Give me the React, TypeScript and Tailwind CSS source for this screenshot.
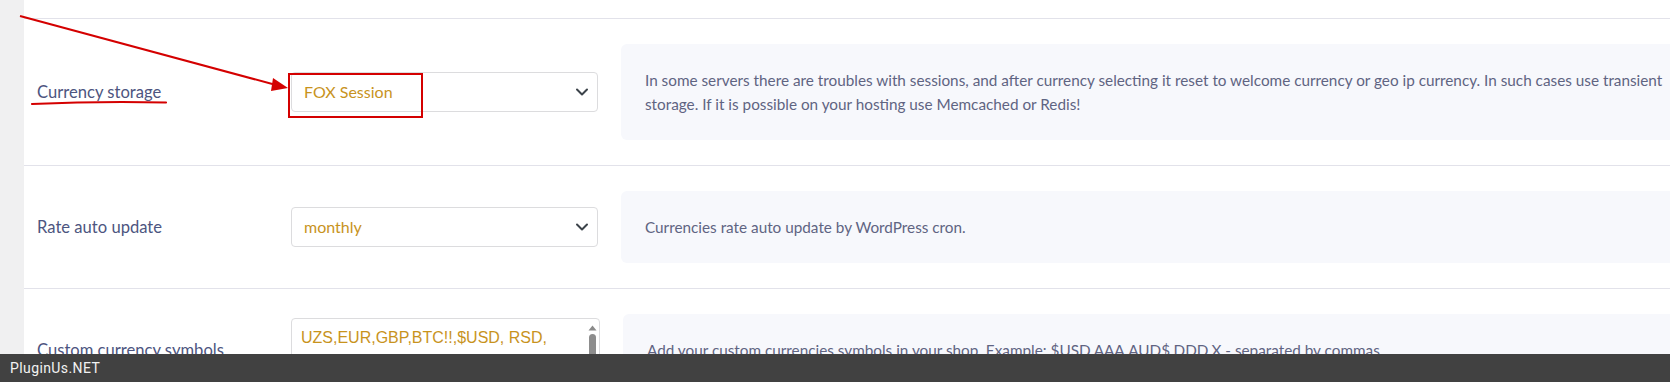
import React from 'react';

const Chevron: React.FC = () => (
    <svg width="14" height="14" viewBox="0 0 14 14" className="shrink-0">
        <path d="M2 4.5l5 5 5-5" fill="none" stroke="#3c434a" strokeWidth="2" strokeLinecap="round" strokeLinejoin="round" />
    </svg>
);

const SelectBox: React.FC<{ value: string }> = ({ value }) => (
    <div className="w-[307px] h-[40px] shrink-0 flex items-center justify-between pl-[12px] pr-[8px] border border-[#dcdcde] rounded-[4px] bg-white">
        <span className="text-[16px] text-[#c8931d]">{value}</span>
        <Chevron />
    </div>
);

const Description: React.FC<{ children: React.ReactNode }> = ({ children }) => (
    <div className="w-[1100px] shrink-0 ml-[23px] bg-[#f7f8fc] rounded-[6px] px-6 py-6 text-[15.3px] leading-6 text-[#5f6482]">
        {children}
    </div>
);

const Row: React.FC<{ label: string; control: React.ReactNode; children: React.ReactNode }> = ({ label, control, children }) => (
    <div className="flex items-center pl-[13px] py-[25px] border-b border-[#e2e2ea]">
        <div className="w-[254px] shrink-0 text-[16.6px] text-[#4d5580]">{label}</div>
        {control}
        <Description>{children}</Description>
    </div>
);

export default function App() {
    return (
        <div className="relative h-[382px] w-full overflow-hidden bg-white font-['Lato','Noto_Sans',sans-serif]">
            <div className="flex h-full">
                <div className="w-[24px] shrink-0 bg-[#f0f0f1]" />
                <div className="flex-1 min-w-0 overflow-hidden">
                    <div className="h-[19px] border-b border-[#e2e2ea]" />
                    <Row label="Currency storage" control={<SelectBox value="FOX Session" />}>
                        In some servers there are troubles with sessions, and after currency selecting it reset to welcome currency or geo ip currency. In such cases use transient storage. If it is possible on your hosting use Memcached or Redis!
                    </Row>
                    <Row label="Rate auto update" control={<SelectBox value="monthly" />}>
                        Currencies rate auto update by WordPress cron.
                    </Row>
                    <Row
                        label="Custom currency symbols"
                        control={
                            <div className="w-[309px] h-[64px] shrink-0 flex border border-[#dcdcde] rounded-[4px] bg-white overflow-hidden">
                                <div className="flex-1 pl-[9px] pt-[9px] font-['Liberation_Sans',Arial,sans-serif] text-[16px] leading-[20px] text-[#c8931d]">
                                    UZS,EUR,GBP,BTC!!,$USD, RSD,
                                </div>
                                <div className="w-[13px] flex flex-col items-center pt-[6px] gap-[3px]">
                                    <svg width="9" height="6" viewBox="0 0 9 6">
                                        <path d="M0.5 5.5h8L4.5 0.5z" fill="#8a8a8a" />
                                    </svg>
                                    <div className="w-[7px] h-[30px] rounded-full bg-[#8d8d8d]" />
                                </div>
                            </div>
                        }
                    >
                        Add your custom currencies symbols in your shop. Example: $USD,AAA,AUD$,DDD,X - separated by commas
                    </Row>
                </div>
            </div>

            {/* red annotations */}
            <svg className="absolute inset-0 pointer-events-none" width="1670" height="382">
                <line x1="20" y1="16" x2="276" y2="85" stroke="#d40000" strokeWidth="2" />
                <polygon points="288,88 273,78 271,91" fill="#d40000" />
                <path d="M32 104 Q100 101 166 102.5" fill="none" stroke="#d40000" strokeWidth="2.2" strokeLinecap="round" />
            </svg>
            <div className="absolute left-[288px] top-[73px] w-[135px] h-[45px] border-2 border-[#d40000] pointer-events-none" />

            <div className="absolute left-0 right-0 bottom-0 h-[28px] bg-[#414141] flex items-center pl-[10px]">
                <span className="font-['Roboto',sans-serif] text-[14px] tracking-[0.4px] text-[#f2f2f2]">PluginUs.NET</span>
            </div>
        </div>
    );
}
